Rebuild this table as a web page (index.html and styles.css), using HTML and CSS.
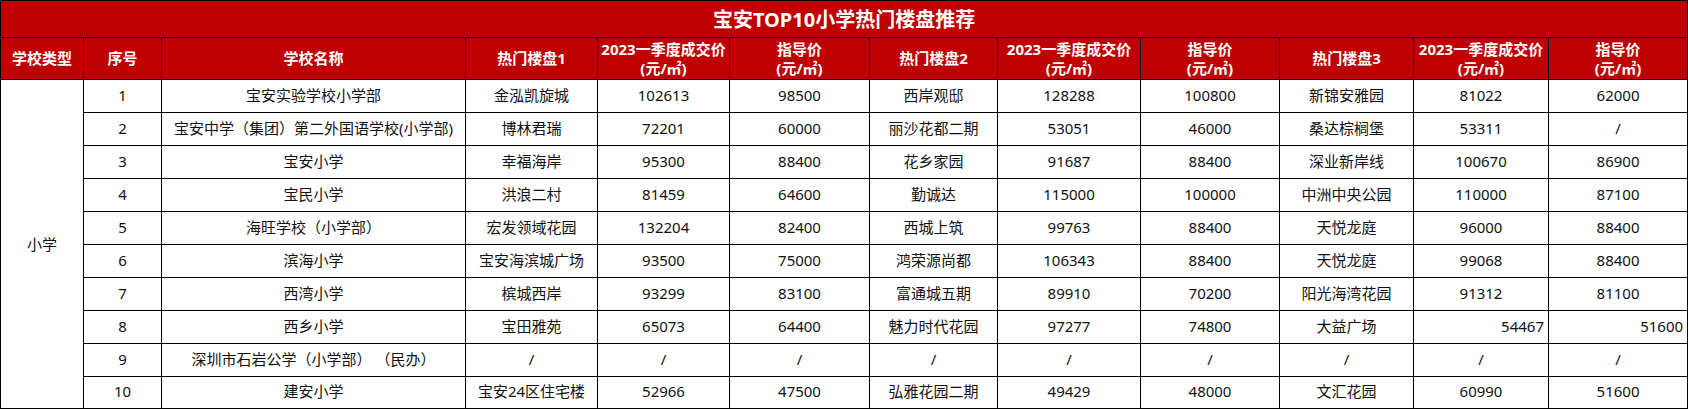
FILE: index.html
```html
<!DOCTYPE html>
<html lang="zh-CN">
<head>
<meta charset="utf-8">
<title>宝安TOP10小学热门楼盘推荐</title>
<link rel="stylesheet" href="styles.css">
</head>
<body>
<table class="sheet">
  <colgroup>
    <col class="c-type"><col class="c-no"><col class="c-name">
    <col class="c-e1"><col class="c-p1"><col class="c-g1">
    <col class="c-e2"><col class="c-p2"><col class="c-g2">
    <col class="c-e3"><col class="c-p3"><col class="c-g3">
  </colgroup>
  <thead>
    <tr class="title-row"><th colspan="12" class="title">宝安TOP10小学热门楼盘推荐</th></tr>
    <tr class="head-row">
      <th>学校类型</th><th>序号</th><th>学校名称</th>
      <th>热门楼盘1</th><th>2023一季度成交价<br>(元/㎡)</th><th>指导价<br>(元/㎡)</th>
      <th>热门楼盘2</th><th>2023一季度成交价<br>(元/㎡)</th><th>指导价<br>(元/㎡)</th>
      <th>热门楼盘3</th><th>2023一季度成交价<br>(元/㎡)</th><th>指导价<br>(元/㎡)</th>
    </tr>
  </thead>
  <tbody>
    <tr class="row">
      <td rowspan="10" class="type">小学</td><td>1</td><td>宝安实验学校小学部</td>
      <td>金泓凯旋城</td><td>102613</td><td>98500</td>
      <td>西岸观邸</td><td>128288</td><td>100800</td>
      <td>新锦安雅园</td><td>81022</td><td>62000</td>
    </tr>
    <tr class="row">
      <td>2</td><td>宝安中学（集团）第二外国语学校(小学部)</td>
      <td>博林君瑞</td><td>72201</td><td>60000</td>
      <td>丽沙花都二期</td><td>53051</td><td>46000</td>
      <td>桑达棕榈堡</td><td>53311</td><td>/</td>
    </tr>
    <tr class="row">
      <td>3</td><td>宝安小学</td>
      <td>幸福海岸</td><td>95300</td><td>88400</td>
      <td>花乡家园</td><td>91687</td><td>88400</td>
      <td>深业新岸线</td><td>100670</td><td>86900</td>
    </tr>
    <tr class="row">
      <td>4</td><td>宝民小学</td>
      <td>洪浪二村</td><td>81459</td><td>64600</td>
      <td>勤诚达</td><td>115000</td><td>100000</td>
      <td>中洲中央公园</td><td>110000</td><td>87100</td>
    </tr>
    <tr class="row">
      <td>5</td><td>海旺学校（小学部）</td>
      <td>宏发领域花园</td><td>132204</td><td>82400</td>
      <td>西城上筑</td><td>99763</td><td>88400</td>
      <td>天悦龙庭</td><td>96000</td><td>88400</td>
    </tr>
    <tr class="row">
      <td>6</td><td>滨海小学</td>
      <td>宝安海滨城广场</td><td>93500</td><td>75000</td>
      <td>鸿荣源尚都</td><td>106343</td><td>88400</td>
      <td>天悦龙庭</td><td>99068</td><td>88400</td>
    </tr>
    <tr class="row">
      <td>7</td><td>西湾小学</td>
      <td>槟城西岸</td><td>93299</td><td>83100</td>
      <td>富通城五期</td><td>89910</td><td>70200</td>
      <td>阳光海湾花园</td><td>91312</td><td>81100</td>
    </tr>
    <tr class="row">
      <td>8</td><td>西乡小学</td>
      <td>宝田雅苑</td><td>65073</td><td>64400</td>
      <td>魅力时代花园</td><td>97277</td><td>74800</td>
      <td>大益广场</td><td class="num-right">54467</td><td class="num-right">51600</td>
    </tr>
    <tr class="row">
      <td>9</td><td>深圳市石岩公学（小学部） （民办）</td>
      <td>/</td><td>/</td><td>/</td>
      <td>/</td><td>/</td><td>/</td>
      <td>/</td><td>/</td><td>/</td>
    </tr>
    <tr class="row last">
      <td>10</td><td>建安小学</td>
      <td>宝安24区住宅楼</td><td>52966</td><td>47500</td>
      <td>弘雅花园二期</td><td>49429</td><td>48000</td>
      <td>文汇花园</td><td>60990</td><td>51600</td>
    </tr>
  </tbody>
</table>
</body>
</html>
```
FILE: styles.css
```css
html, body {
  margin: 0;
  padding: 0;
  background: #ffffff;
}

.sheet {
  border-collapse: collapse;
  table-layout: fixed;
  width: 1687px;
  font-family: "Noto Sans", "Noto Sans CJK SC", sans-serif;
  font-size: 15px;
  color: #111111;
}

.c-type { width: 83px; }
.c-no { width: 78px; }
.c-name { width: 304px; }
.c-e1 { width: 132px; }
.c-p1 { width: 132px; }
.c-g1 { width: 140px; }
.c-e2 { width: 128px; }
.c-p2 { width: 143px; }
.c-g2 { width: 139px; }
.c-e3 { width: 134px; }
.c-p3 { width: 135px; }
.c-g3 { width: 139px; }

.sheet th,
.sheet td {
  border: 1px solid #000000;
  padding: 0 2px;
  text-align: center;
  vertical-align: middle;
  white-space: nowrap;
  overflow: hidden;
}

.sheet th {
  background: #c00000;
  color: #ffffff;
  font-weight: 700;
  line-height: 19px;
}

.title-row { height: 37px; }
.title-row .title {
  font-size: 20px;
  line-height: 24px;
  padding-top: 1px;
}

.head-row { height: 42px; }

.row { height: 33px; }
.row.last { height: 32px; }
.row td {
  line-height: 18px;
  padding-bottom: 3px;
}

.sheet td.type {
  padding-bottom: 0;
}

.sheet td.num-right {
  text-align: right;
  padding-right: 4px;
}
```
